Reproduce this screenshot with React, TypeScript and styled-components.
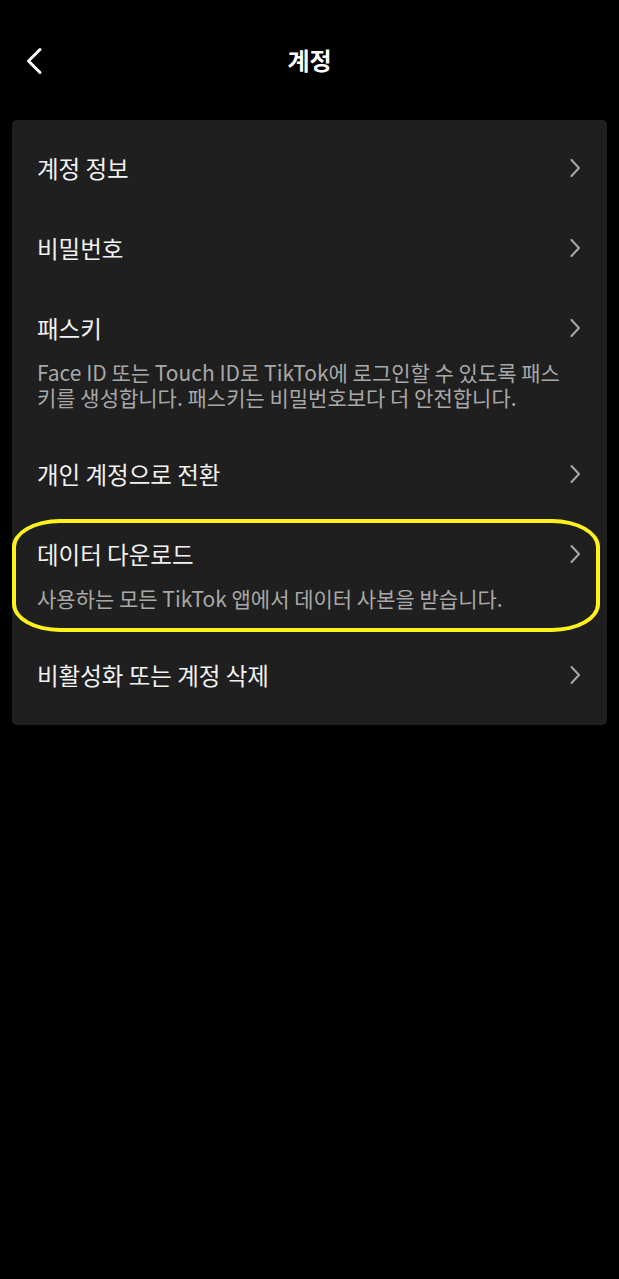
import styled, { createGlobalStyle } from 'styled-components';

type Item = {
  title: string;
  description?: string;
  highlighted?: boolean;
};

const items: Item[] = [
  { title: '계정 정보' },
  { title: '비밀번호' },
  {
    title: '패스키',
    description:
      'Face ID 또는 Touch ID로 TikTok에 로그인할 수 있도록 패스키를 생성합니다. 패스키는 비밀번호보다 더 안전합니다.',
  },
  { title: '개인 계정으로 전환' },
  {
    title: '데이터 다운로드',
    description: '사용하는 모든 TikTok 앱에서 데이터 사본을 받습니다.',
    highlighted: true,
  },
  { title: '비활성화 또는 계정 삭제' },
];

const App: React.FC = () => {
  return (
    <>
      <GlobalStyle />
      <Screen>
        <Header>
          <BackButton aria-label="뒤로">
            <svg width="18" height="28" viewBox="0 0 18 28" fill="none">
              <path
                d="M15 2.5L3.5 14L15 25.5"
                stroke="#fff"
                strokeWidth="3"
                strokeLinecap="round"
                strokeLinejoin="round"
              />
            </svg>
          </BackButton>
          <Title>계정</Title>
        </Header>

        <Card>
          {items.map((item) => (
            <Row key={item.title} $hasDescription={!!item.description}>
              <TextColumn>
                <RowTitle>{item.title}</RowTitle>
                {item.description && <Description>{item.description}</Description>}
              </TextColumn>
              <Chevron>
                <svg width="12" height="20" viewBox="0 0 12 20" fill="none">
                  <path
                    d="M2.5 2L10 10L2.5 18"
                    stroke="#a9a9a9"
                    strokeWidth="2"
                    strokeLinecap="round"
                    strokeLinejoin="round"
                  />
                </svg>
              </Chevron>
              {item.highlighted && <Highlight />}
            </Row>
          ))}
        </Card>
      </Screen>
    </>
  );
};

const GlobalStyle = createGlobalStyle`
  html, body {
    margin: 0;
    padding: 0;
    background: #000;
  }

  body {
    font-family: 'Noto Sans CJK KR', 'Noto Sans', sans-serif;
    -webkit-font-smoothing: antialiased;
  }

  * {
    box-sizing: border-box;
  }
`;

const Screen = styled.div`
  width: 619px;
  min-height: 1279px;
  background: #000;
  padding: 0 12px;
`;

const Header = styled.header`
  position: relative;
  height: 120px;
  display: flex;
  align-items: center;
  justify-content: center;
`;

const BackButton = styled.button`
  position: absolute;
  left: 10px;
  top: 47px;
  width: 24px;
  height: 28px;
  padding: 0;
  border: 0;
  background: none;
  display: flex;
  align-items: center;
  justify-content: center;
`;

const Title = styled.h1`
  margin: 0;
  color: #fff;
  font-size: 24px;
  font-weight: 700;
  line-height: 28px;
`;

const Card = styled.section`
  background: #1f1f1f;
  border-radius: 5px;
  padding: 8px 0 10px;
  display: flex;
  flex-direction: column;
`;

const Row = styled.div<{ $hasDescription: boolean }>`
  position: relative;
  display: flex;
  align-items: flex-start;
  gap: 4px;
  padding: 28px 26px ${({ $hasDescription }) => ($hasDescription ? '24px' : '28px')} 25px;
`;

const TextColumn = styled.div`
  flex: 1;
  min-width: 0;
  display: flex;
  flex-direction: column;
`;

const RowTitle = styled.span`
  color: #f2f2f2;
  font-size: 23.5px;
  font-weight: 400;
  line-height: 24px;
`;

const Description = styled.p`
  margin: 20px 0 0;
  color: #a8a8a8;
  font-size: 21px;
  line-height: 25px;
`;

const Chevron = styled.span`
  flex: none;
  width: 12px;
  height: 24px;
  display: flex;
  align-items: center;
  justify-content: center;
`;

const Highlight = styled.div`
  position: absolute;
  left: 0;
  right: 7px;
  top: 5px;
  bottom: 3px;
  border: 4px solid #fff21a;
  border-radius: 48px / 28px;
  pointer-events: none;
`;

export default App;
